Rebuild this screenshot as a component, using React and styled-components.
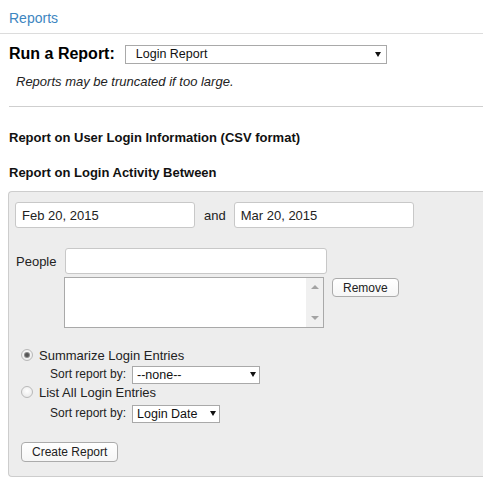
import React from "react";
import styled, { createGlobalStyle } from "styled-components";

const GlobalStyle = createGlobalStyle`
  html, body {
    margin: 0;
    padding: 0;
    overflow: hidden;
    background: #fff;
  }
  body {
    font-family: "Liberation Sans", Arial, sans-serif;
    color: #222;
  }
  * { box-sizing: border-box; }
`;

const Header = styled.header`
  height: 34px;
  padding: 10px 0 0 9px;
  border-bottom: 1px solid #dcdcdc;
`;

const Title = styled.h1`
  margin: 0;
  font-size: 14px;
  line-height: 16px;
  font-weight: normal;
  color: #3d86c1;
`;

const Main = styled.main`
  padding: 0 0 0 8px;
`;

const RunRow = styled.div`
  display: flex;
  align-items: center;
  height: 19px;
  margin-top: 10px;
  gap: 10px;
`;

const RunLabel = styled.label`
  font-size: 16px;
  font-weight: bold;
  color: #000;
  padding-left: 1px;
  line-height: 19px;
`;

const SelectWrap = styled.div`
  position: relative;
  width: ${(p) => p.$w}px;
  height: ${(p) => p.$h}px;
  &::after {
    content: "";
    position: absolute;
    right: ${(p) => p.$arrowRight}px;
    top: 50%;
    margin-top: -2px;
    border-left: 3px solid transparent;
    border-right: 3px solid transparent;
    border-top: 5px solid #111;
    pointer-events: none;
  }
`;

const Select = styled.select`
  appearance: none;
  -webkit-appearance: none;
  width: 100%;
  height: 100%;
  margin: 0;
  border: 1px solid #a9a9a9;
  border-radius: 0;
  background: #fff;
  font-family: "Liberation Sans", Arial, sans-serif;
  font-size: 12.5px;
  color: #111;
  padding: 0 14px 0 ${(p) => p.$pl}px;
  line-height: 16px;
  outline: none;
`;

const Note = styled.p`
  margin: 11px 0 0 8px;
  font-size: 13px;
  line-height: 15px;
  font-style: italic;
  color: #222;
`;

const Divider = styled.hr`
  margin: 17px 0 0 1px;
  border: 0;
  border-top: 1px solid #cfcfcf;
  height: 0;
`;

const SectionTitle = styled.h2`
  margin: ${(p) => p.$mt}px 0 0 1px;
  font-size: 13px;
  line-height: 15px;
  font-weight: bold;
  color: #111;
`;

const Panel = styled.section`
  margin-top: 11px;
  background: #ededed;
  border: 1px solid #cdcdcd;
  border-right: none;
  border-radius: 4px 0 0 4px;
  padding: 10px 6px 14px 6px;
`;

const DateRow = styled.div`
  display: flex;
  align-items: center;
  gap: 9px;
`;

const TextInput = styled.input`
  width: ${(p) => p.$w}px;
  height: 26px;
  margin: 0;
  border: 1px solid #c8c8c8;
  border-radius: 3px;
  background: #fff;
  font-family: "Liberation Sans", Arial, sans-serif;
  font-size: 13px;
  color: #222;
  padding: 0 6px;
  outline: none;
`;

const Joiner = styled.span`
  font-size: 13px;
  color: #222;
  margin-right: -1px;
`;

const PeopleGrid = styled.div`
  margin-top: 20px;
  display: grid;
  grid-template-columns: 49px auto 1fr;
  row-gap: 3px;
  align-items: center;
`;

const FieldLabel = styled.label`
  font-size: 13px;
  color: #222;
  padding-left: 1px;
`;

const PeopleInput = styled(TextInput)`
  margin-left: 1px;
  grid-column: 2 / 3;
`;

const ListBox = styled.div`
  grid-column: 2 / 3;
  width: 260px;
  height: 51px;
  border: 1px solid #a9a9a9;
  background: #fff;
  display: flex;
  justify-content: flex-end;
`;

const ScrollTrack = styled.div`
  width: 17px;
  background: #f0f0f0;
  display: flex;
  flex-direction: column;
  justify-content: space-between;
  align-items: center;
  padding: 7px 0 7px;
`;

const ScrollArrow = styled.span`
  width: 0;
  height: 0;
  border-left: 4px solid transparent;
  border-right: 4px solid transparent;
  ${(p) =>
    p.$dir === "up"
      ? "border-bottom: 4px solid #a3a3a3;"
      : "border-top: 4px solid #a3a3a3;"}
`;

const Button = styled.button`
  height: ${(p) => p.$h}px;
  margin: 0;
  padding: 0 10px;
  border: 1px solid #ababab;
  border-radius: 4px;
  background: linear-gradient(#ffffff, #f6f6f6);
  font-family: "Liberation Sans", Arial, sans-serif;
  font-size: 12px;
  color: #222;
  line-height: 16px;
  cursor: pointer;
`;

const RemoveButton = styled(Button)`
  justify-self: start;
  align-self: start;
  margin: 1px 0 0 5px;
`;

const CreateButton = styled(Button)`
  display: block;
  margin: 20px 0 0 6px;
`;

const RadioRow = styled.label`
  display: flex;
  align-items: center;
  gap: 6px;
  height: 16px;
  margin-top: ${(p) => p.$mt}px;
  padding-left: 6px;
  font-size: 13px;
  color: #222;
`;

const Radio = styled.input.attrs({ type: "radio" })`
  appearance: none;
  -webkit-appearance: none;
  margin: 0;
  width: 12px;
  height: 12px;
  border-radius: 50%;
  border: 1px solid #b9b9b9;
  background: radial-gradient(circle at 50% 40%, #ffffff 0%, #ececec 70%, #dcdcdc 100%);
  display: grid;
  place-items: center;
  &:checked::before {
    content: "";
    width: 4px;
    height: 4px;
    border-radius: 50%;
    background: #555;
    box-shadow: 0 0 0 1px #8a8a8a;
  }
`;

const SortRow = styled.div`
  display: flex;
  align-items: center;
  gap: 6px;
  height: 18px;
  margin-top: ${(p) => p.$mt}px;
  padding-left: 35px;
`;

const SortLabel = styled.span`
  font-size: 12px;
  color: #222;
`;

export default function App() {
  return (
    <>
      <GlobalStyle />
      <Header>
        <Title>Reports</Title>
      </Header>
      <Main>
        <RunRow>
          <RunLabel>Run a Report:</RunLabel>
          <SelectWrap $w={262} $h={19} $arrowRight={6}>
            <Select $pl={10} defaultValue="login">
              <option value="login">Login Report</option>
            </Select>
          </SelectWrap>
        </RunRow>
        <Note>Reports may be truncated if too large.</Note>
        <Divider />
        <SectionTitle $mt={23}>Report on User Login Information (CSV format)</SectionTitle>
        <SectionTitle $mt={20}>Report on Login Activity Between</SectionTitle>
        <Panel>
          <DateRow>
            <TextInput $w={180} readOnly defaultValue="Feb 20, 2015" />
            <Joiner>and</Joiner>
            <TextInput $w={180} readOnly defaultValue="Mar 20, 2015" />
          </DateRow>
          <PeopleGrid>
            <FieldLabel>People</FieldLabel>
            <PeopleInput $w={262} readOnly defaultValue="" />
            <span />
            <span />
            <ListBox>
              <ScrollTrack>
                <ScrollArrow $dir="up" />
                <ScrollArrow $dir="down" />
              </ScrollTrack>
            </ListBox>
            <RemoveButton $h={19}>Remove</RemoveButton>
          </PeopleGrid>
          <RadioRow $mt={19}>
            <Radio name="mode" defaultChecked />
            Summarize Login Entries
          </RadioRow>
          <SortRow $mt={2}>
            <SortLabel>Sort report by:</SortLabel>
            <SelectWrap $w={128} $h={18} $arrowRight={4}>
              <Select $pl={4} defaultValue="none">
                <option value="none">--none--</option>
              </Select>
            </SelectWrap>
          </SortRow>
          <RadioRow $mt={1}>
            <Radio name="mode" />
            List All Login Entries
          </RadioRow>
          <SortRow $mt={4}>
            <SortLabel>Sort report by:</SortLabel>
            <SelectWrap $w={88} $h={18} $arrowRight={4}>
              <Select $pl={4} defaultValue="date">
                <option value="date">Login Date</option>
              </Select>
            </SelectWrap>
          </SortRow>
          <CreateButton $h={20}>Create Report</CreateButton>
        </Panel>
      </Main>
    </>
  );
}
